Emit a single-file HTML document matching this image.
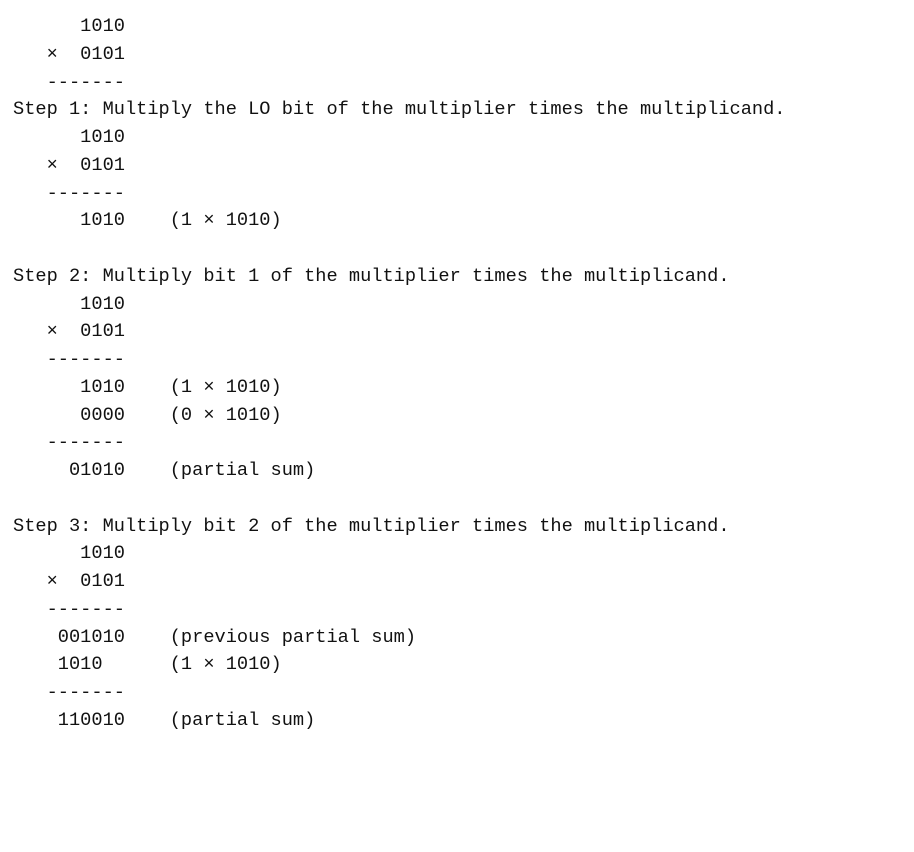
<!DOCTYPE html>
<html><head><meta charset="utf-8"><style>
html,body{margin:0;padding:0;background:#fff;width:914px;height:852px;overflow:hidden}
pre{margin:0;position:absolute;left:13px;top:13px;font-family:"Liberation Mono",monospace;font-size:18.67px;line-height:27.75px;color:#111}
</style></head><body><pre>      1010
   ×  0101
   -------
Step 1: Multiply the LO bit of the multiplier times the multiplicand.
      1010
   ×  0101
   -------
      1010    (1 × 1010)

Step 2: Multiply bit 1 of the multiplier times the multiplicand.
      1010
   ×  0101
   -------
      1010    (1 × 1010)
      0000    (0 × 1010)
   -------
     01010    (partial sum)

Step 3: Multiply bit 2 of the multiplier times the multiplicand.
      1010
   ×  0101
   -------
    001010    (previous partial sum)
    1010      (1 × 1010)
   -------
    110010    (partial sum)
</pre></body></html>
